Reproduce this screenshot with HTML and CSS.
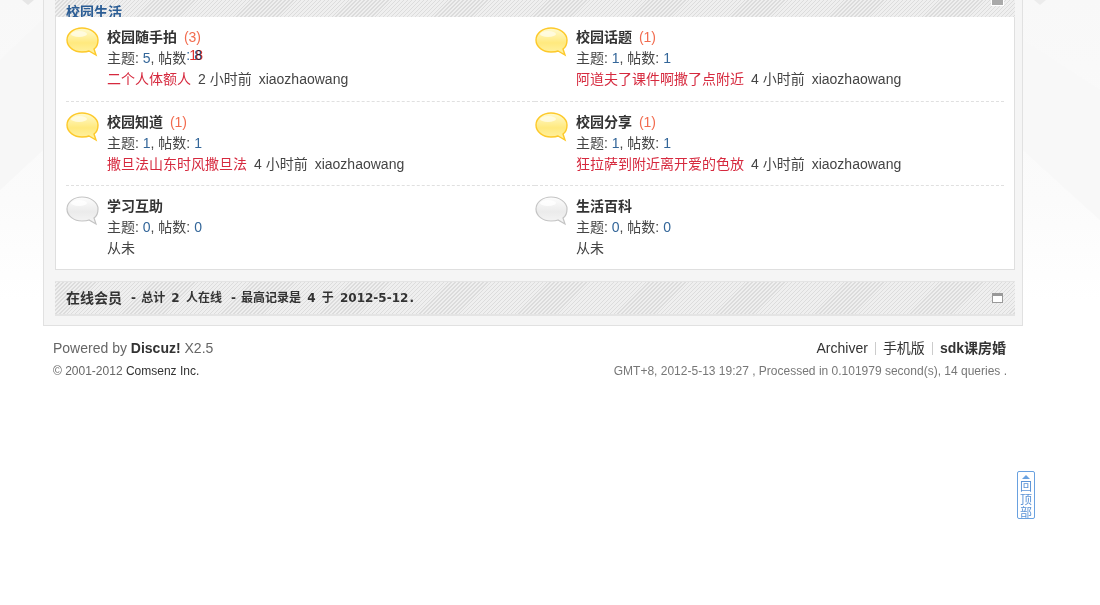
FILE: index.html
```html
<!DOCTYPE html>
<html lang="zh">
<head>
<meta charset="utf-8">
<title>校园生活</title>
<link rel="stylesheet" href="styles.css">
</head>
<body>
<div class="backdrop">
  <svg class="facets" width="1100" height="330" viewBox="0 0 1100 330" aria-hidden="true">
    <polygon points="0,60 43,20 43,150 0,190" fill="#f7f7f7"/>
    <polygon points="1023,40 1100,90 1100,220 1023,150" fill="#f8f8f8"/>
    <polygon points="22,0 34,0 28,5" fill="#e6e6e6"/>
    <polygon points="1034,0 1046,0 1040,5" fill="#ececec"/>
  </svg>
  <main class="wrap">
    <section class="panel">
      <header class="bar bar-clipped">
        <h2 class="bar-title">校园生活</h2>
        <span class="collapse collapse-clipped"></span>
      </header>
      <div class="forums">
        <article class="forum">
          <svg class="bubble" viewBox="0 0 33 30"><use href="#b-new"/></svg>
          <div class="forum-text">
            <h3 class="forum-name">校园随手拍 <span class="today">(3)</span></h3>
            <p class="stats stats-overlap">主题: <span class="num">5</span>, 帖数<span class="overlap"><span class="ov-a">: 8</span><span class="ov-b">18</span></span></p>
            <p class="last"><a class="red">二个人体额人</a><span class="time">2 小时前</span><span>xiaozhaowang</span></p>
          </div>
        </article>
        <article class="forum">
          <svg class="bubble" viewBox="0 0 33 30"><use href="#b-new"/></svg>
          <div class="forum-text">
            <h3 class="forum-name">校园话题 <span class="today">(1)</span></h3>
            <p class="stats">主题: <span class="num">1</span>, 帖数: <span class="num">1</span></p>
            <p class="last"><a class="red">阿道夫了课件啊撒了点附近</a><span class="time">4 小时前</span><span>xiaozhaowang</span></p>
          </div>
        </article>
        <article class="forum">
          <svg class="bubble" viewBox="0 0 33 30"><use href="#b-new"/></svg>
          <div class="forum-text">
            <h3 class="forum-name">校园知道 <span class="today">(1)</span></h3>
            <p class="stats">主题: <span class="num">1</span>, 帖数: <span class="num">1</span></p>
            <p class="last"><a class="red">撒旦法山东时风撒旦法</a><span class="time">4 小时前</span><span>xiaozhaowang</span></p>
          </div>
        </article>
        <article class="forum">
          <svg class="bubble" viewBox="0 0 33 30"><use href="#b-new"/></svg>
          <div class="forum-text">
            <h3 class="forum-name">校园分享 <span class="today">(1)</span></h3>
            <p class="stats">主题: <span class="num">1</span>, 帖数: <span class="num">1</span></p>
            <p class="last"><a class="red">狂拉萨到附近离开爱的色放</a><span class="time">4 小时前</span><span>xiaozhaowang</span></p>
          </div>
        </article>
        <article class="forum forum-end">
          <svg class="bubble" viewBox="0 0 33 30"><use href="#b-old"/></svg>
          <div class="forum-text">
            <h3 class="forum-name">学习互助</h3>
            <p class="stats">主题: <span class="num">0</span>, 帖数: <span class="num">0</span></p>
            <p class="last">从未</p>
          </div>
        </article>
        <article class="forum forum-end">
          <svg class="bubble" viewBox="0 0 33 30"><use href="#b-old"/></svg>
          <div class="forum-text">
            <h3 class="forum-name">生活百科</h3>
            <p class="stats">主题: <span class="num">0</span>, 帖数: <span class="num">0</span></p>
            <p class="last">从未</p>
          </div>
        </article>
      </div>
    </section>
    <section class="bar bar-online">
      <h2 class="online-title">在线会员</h2>
      <span class="online-info">- 总计 <b>2</b> 人在线</span>
      <span class="online-info">- 最高记录是 <b>4</b> 于 <b>2012-5-12</b>.</span>
      <span class="collapse"></span>
    </section>
  </main>
</div>
<footer class="foot">
  <div class="foot-left">
    <p class="power">Powered by <strong>Discuz!</strong> X2.5</p>
    <p class="copy">© 2001-2012 <span class="dark">Comsenz Inc.</span></p>
  </div>
  <div class="foot-right">
    <nav class="foot-links"><a>Archiver</a><i></i><a>手机版</a><i></i><a class="strong">sdk课房婚</a></nav>
    <p class="gmt">GMT+8, 2012-5-13 19:27 , Processed in 0.101979 second(s), 14 queries .</p>
  </div>
</footer>
<a class="top-btn"><span class="arrow"></span>回顶部</a>
<svg class="defs" width="0" height="0" aria-hidden="true">
  <defs>
    <linearGradient id="gy" x1="0" y1="0" x2="0" y2="1"><stop offset="0" stop-color="#fffbd0"/><stop offset=".55" stop-color="#ffe97e"/><stop offset="1" stop-color="#fff3a8"/></linearGradient>
    <linearGradient id="gg" x1="0" y1="0" x2="0" y2="1"><stop offset="0" stop-color="#fdfdfd"/><stop offset=".55" stop-color="#ebebeb"/><stop offset="1" stop-color="#f6f6f6"/></linearGradient>
    <symbol id="b-new" viewBox="0 0 33 30"><path d="M16 1C8 1 1 6 1 13s7 12 15 12c3 0 5 0 7-1l7 4-2-6c3-2 4-5 4-9C32 6 24 1 16 1z" fill="url(#gy)" stroke="#fdc92a" stroke-width="1.4"/><ellipse cx="13" cy="7" rx="8" ry="3" fill="#fffde8" opacity=".8"/></symbol>
    <symbol id="b-old" viewBox="0 0 33 30"><path d="M16 1C8 1 1 6 1 13s7 12 15 12c3 0 5 0 7-1l7 4-2-6c3-2 4-5 4-9C32 6 24 1 16 1z" fill="url(#gg)" stroke="#c4c4c4" stroke-width="1.2"/><ellipse cx="13" cy="7" rx="8" ry="3" fill="#fff" opacity=".8"/></symbol>
  </defs>
</svg>
</body>
</html>
```
FILE: styles.css
```css
* { box-sizing: border-box; }
html, body { margin: 0; padding: 0; }
body {
  width: 1100px;
  height: 605px;
  overflow: hidden;
  position: relative;
  background: #fff;
  color: #444;
  font: 14px/21px "Liberation Sans", "Noto Sans CJK SC", sans-serif;
}
h2, h3, p { margin: 0; }
.backdrop { position: relative; height: 326px; background: linear-gradient(#f8f8f8 0, #fbfbfb 200px, #fff 300px); padding-left: 43px; }
.facets { position: absolute; left: 0; top: 0; }
.wrap {
  position: relative;
  width: 980px;
  height: 326px;
  padding: 0 9px 0 11px;
  background: #f5f5f5;
  border: 1px solid #e1e1e1;
  border-top: 0;
}
.bar {
  display: flex;
  align-items: center;
  width: 960px;
  background: repeating-linear-gradient(135deg, #dcdcdc 0 1px, #efefef 1px 2.8px);
}
.panel { width: 960px; border: 1px solid #dfdfdf; border-top: 0; background: #fff; height: 270px; }
.bar-clipped { margin-left: -1px; height: 17px; padding-left: 11px; align-items: flex-end; overflow: hidden; border-bottom: 0; position: relative; }
.bar-title { font-size: 14px; line-height: 20px; height: 13px; margin-bottom: -1px; color: #2b5d95; font-weight: bold; overflow: visible; position: relative; top: -3px; }
.collapse { margin-left: auto; margin-right: 12px; width: 11px; height: 10px; border: 1px solid #999; border-top-width: 3px; background: #fff; flex: none; }
.collapse-clipped { height: 6px; background: #aaa; position: absolute; top: -1px; right: 0; border-color: #aaa; box-shadow: 0 0 0 1px #fff; }
.forums { display: grid; grid-template-columns: 469px 469px; padding: 0 10px 0 10px; }
.forum { display: flex; height: 84.5px; padding-top: 10px; border-bottom: 1px dashed #e0e0e0; }
.forum-end { border-bottom: 0; }
.bubble { width: 33px; height: 30px; flex: none; margin-right: 8px; }
.forum-name { font-size: 14px; line-height: 21px; font-weight: bold; color: #333; }
.today { color: #f26c4f; font-weight: normal; margin-left: 3px; }
.stats { color: #444; }
.num { color: #369; }
.overlap { position: relative; display: inline-block; width: 16px; height: 14px; }
.ov-a { position: absolute; left: 0; top: -4px; color: #369; white-space: pre; }
.ov-b { position: absolute; left: 3px; top: -4px; color: #d33; white-space: pre; mix-blend-mode: multiply; letter-spacing: -2px; }
.last { display: flex; gap: 7px; color: #444; }
.red { color: #d6293e; }
.time { margin-left: 0; }
.bar-online { margin-top: 11px; height: 35px; padding-left: 11px; border: 1px solid #e4e4e4; border-width: 1px 0 2px; gap: 9px; }
.online-title { font-size: 14px; font-weight: bold; color: #333; }
.online-info { font-size: 12px; font-weight: bold; color: #333; font-family: "DejaVu Sans", "Noto Sans CJK SC", sans-serif; word-spacing: 1px; }
.online-info b { margin: 0 1px; }
.foot { display: flex; justify-content: space-between; width: 953px; margin-left: 53px; padding-top: 11px; color: #666; }
.power { line-height: 22px; }
.power strong { color: #333; }
.copy { font-size: 12px; line-height: 24px; }
.dark { color: #333; }
.foot-right { text-align: right; }
.foot-links { display: flex; justify-content: flex-end; align-items: center; line-height: 22px; color: #333; }
.foot-links i { width: 1px; height: 13px; background: #ccc; margin: 0 7px; }
.strong { font-weight: bold; }
.gmt { font-size: 12px; line-height: 24px; margin-right: -1px; color: #777; }
.top-btn {
  position: absolute;
  left: 1017px;
  top: 471px;
  width: 18px;
  height: 48px;
  border: 1px solid #69a1e0;
  border-radius: 2px;
  color: #5b93d6;
  font-size: 12px;
  line-height: 13px;
  text-align: center;
  padding-top: 9px;
  background: #fff;
}
.arrow { position: absolute; left: 4px; top: 3px; border: 4px solid transparent; border-top: 0; border-bottom: 4px solid #69a1e0; }
.defs { position: absolute; }
```
